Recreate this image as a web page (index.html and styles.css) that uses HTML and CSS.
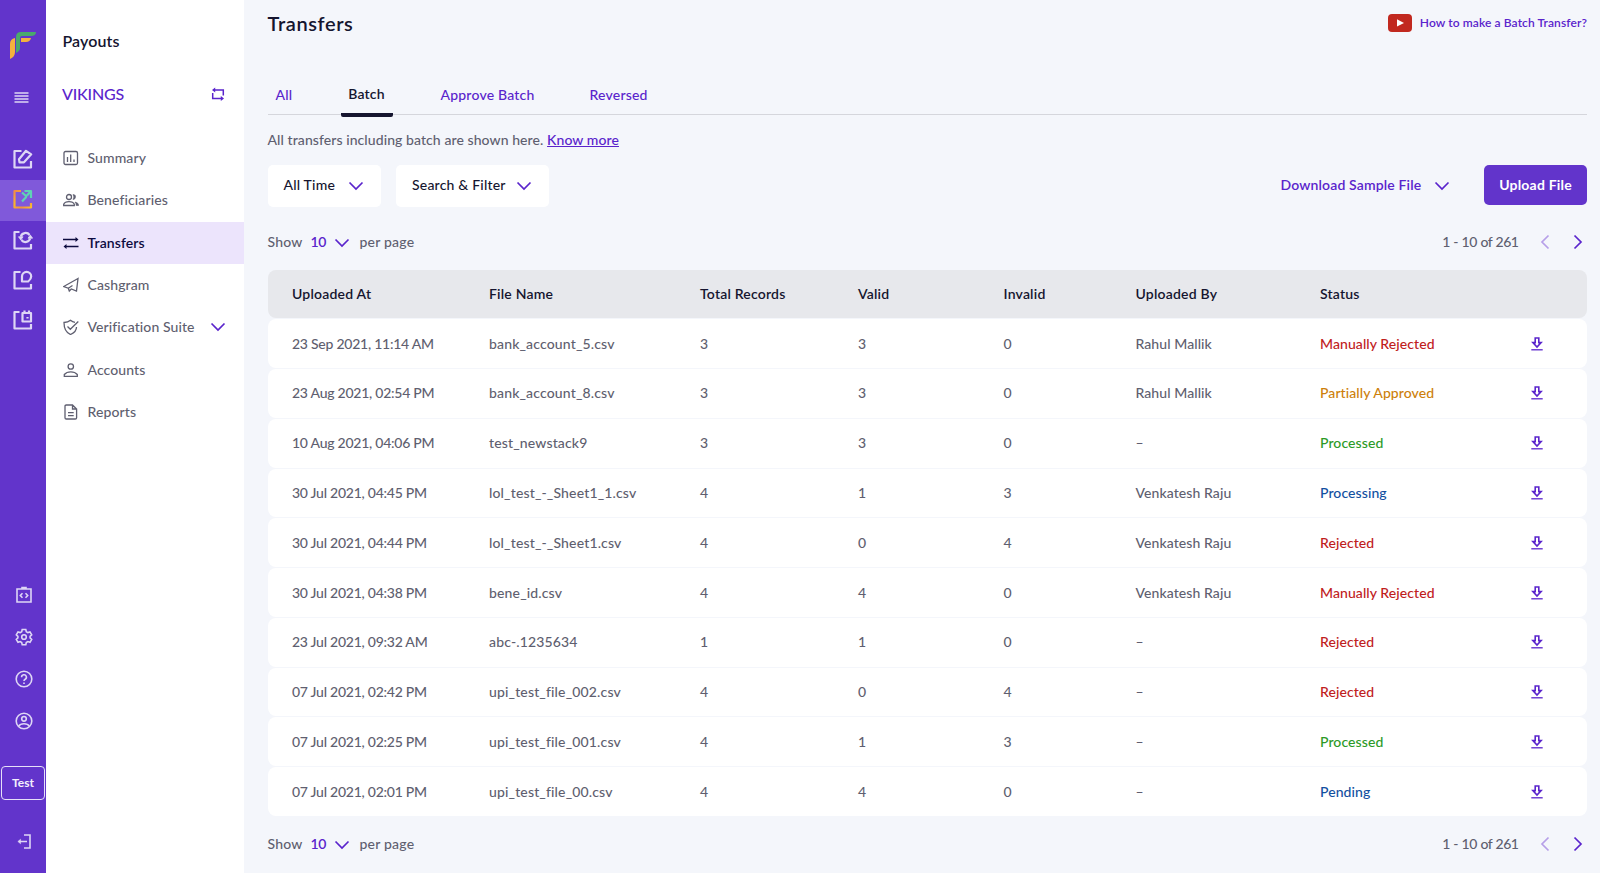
FILE: index.html
```
<!DOCTYPE html>
<html lang="en">
<head>
    <meta charset="UTF-8">
    <title>Payouts - Transfers</title>
    <link rel="stylesheet" href="styles.css">
</head>
<body>
    <svg class="sprite">
        <symbol id="chevron" viewBox="0 0 16 10"><path d="M1.500 1.500l6.500 6.500 6.500-6.500"/></symbol>
        <symbol id="left" viewBox="0 0 10 16"><path d="M8.500 1.500L2 8l6.500 6.500"/></symbol>
        <symbol id="right" viewBox="0 0 10 16"><path d="M1.500 1.500L8 8l-6.500 6.500"/></symbol>
        <symbol id="download" viewBox="0 0 12 14"><path d="M4.200 1h3.600v4.600h2.300L6 10 1.900 5.600h2.300z" stroke-width="1.600"/><path d="M.3 12.800h11.400" stroke-width="1.300"/></symbol>
    </svg>

    <div class="rail">
        <svg class="logo" viewBox="0 0 26 27"><path d="M5 6v14q0 5-5 7V12q0-5 5-6z" fill="#f4b23e"/><path d="M11 6h10q-1 4-5 4h-5z" fill="#f4b23e"/><path d="M26 0q0 4-5 4h-9q-2 0-2 2v10q0 3-4 5V5q0-5 5-5z" fill="#4aa96c"/></svg>
        <svg class="burger" viewBox="0 0 15 11"><path d="M.5 1h14M.5 4h14M.5 7h14M.5 10h14"/></svg>

        <div class="products">
            <a class="product"><svg viewBox="0 0 20 20"><path d="M8.500 2H1.500v16.500H18V12"/><path d="M6 10.200L13 1.800l5.200 3.500-7.200 8H6.500z"/></svg></a>
            <a class="product active"><svg viewBox="0 0 20 20">
                <defs><linearGradient id="warm" x1="0" y1="0" x2="1" y2="1"><stop offset="0" stop-color="#f08a4b"/><stop offset=".4" stop-color="#f9b52c"/><stop offset=".7" stop-color="#f2923f"/><stop offset="1" stop-color="#f9bd2c"/></linearGradient></defs>
                <path d="M8 2H1.500v16.500H18V14" stroke="url(#warm)"/><path d="M11.500 2H18v7M17.500 2.500l-3.500 4M9 3.500l4 3.500q.5.500 0 1.200L9 12.500" stroke="#5fd3b4"/></svg></a>
            <a class="product"><svg viewBox="0 0 20 20"><path d="M6.500 2H1.500v16.500H18V14"/><path d="M7.800 6.500a5 5 0 0 1 8.800-1.500M17.200 8.500a5 5 0 0 1-8.800 1.500"/><path d="M5.500 6.800h4.600L7.800 10zM19.600 8.200H15l2.300-3.200z" fill="#ded6f5" stroke-width=".8"/></svg></a>
            <a class="product"><svg viewBox="0 0 20 20"><path d="M7.500 2H1.500v16.500H18V14"/><path d="M9 11.500V6.500a4.600 4.600 0 0 1 9.200 0q0 2.500-3 5z"/></svg></a>
            <a class="product"><svg viewBox="0 0 20 20"><path d="M6.500 2H1.500v16.500H18V14"/><path d="M9.500 3H18v8.500H9.500zM11.500.500v2.500M16 .500v2.500"/><path d="M14.500 7v1.500"/></svg></a>
        </div>

        <div class="tools">
            <svg viewBox="0 0 18 18"><path d="M2 3h14v13H2zM7 3V1.500h4V3M7.500 7.200L5.300 9.500l2.200 2.300M10.500 7.200l2.200 2.300-2.200 2.300"/></svg>
            <svg viewBox="0 0 18 18"><path d="M7.200 1.500h3.600l.5 2.200 1.500.9 2.200-.7 1.700 3-1.600 1.500v1.400l1.600 1.500-1.700 3-2.200-.7-1.500.9-.5 2.200H7.200l-.5-2.200-1.500-.9-2.200.7-1.700-3 1.600-1.500V8.400L1.300 6.900l1.700-3 2.200.7 1.500-.9z"/><circle cx="9" cy="9" r="2.300"/></svg>
            <svg viewBox="0 0 18 18"><circle cx="9" cy="9" r="7.800"/><path d="M6.600 7.200a2.400 2.400 0 1 1 3.600 2c-.8.500-1.200.9-1.200 1.800M9 12.500v1.500"/></svg>
            <svg viewBox="0 0 18 18"><circle cx="9" cy="9" r="7.800"/><circle cx="9" cy="6.800" r="2.300"/><path d="M3.700 14c1-1.600 3-2.300 5.300-2.300s4.300.7 5.300 2.300"/></svg>
        </div>
        <div class="test">Test</div>
        <svg class="logout" viewBox="0 0 14 15"><path d="M7 1h6v13H7M10 7.500H2"/><path d="M3.600 5.200v4.600L.8 7.500z" fill="#ded6f5" stroke-width=".5"/></svg>
    </div>

    <div class="sidebar">
        <div class="app-name">Payouts</div>
        <div class="merchant"><span>VIKINGS</span><svg viewBox="0 0 14 14"><path d="M1.700 6v5.500H10M12.300 8.500V3H4"/><path d="M4.200.500v5L1 3zM9.800 9v5l3.200-2.500z" fill="#5a24cc" stroke="none"/></svg></div>
        <div class="menu">
            <a><svg viewBox="0 0 16 16"><rect x="1" y="1.500" width="13.500" height="13" rx="1.500"/><path d="M4.500 7v5M7.700 4.500V12M11 9.500V12"/></svg>Summary</a>
            <a><svg viewBox="0 0 16 16"><circle cx="6" cy="5" r="2.500"/><path d="M.7 13.500v-1.200C1.500 10.500 3.700 9.700 6 9.700s4.500.8 5.300 2.600v1.200z"/><path d="M10 2.500q3 .2 2.500 2.700T10 7.500q1.800-2.500 0-5zM12 10q3.500.5 3.700 3.500h-2.500q.2-2-1.200-3.500z" fill="#636375" stroke-width=".6"/></svg>Beneficiaries</a>
            <a class="current"><svg viewBox="0 0 16 16"><path d="M0 4.500h13M15.500 11.500h-13" stroke-width="1.500"/><path d="M12.500 2v5l3-2.500zM3.500 9v5l-3-2.500z" fill="#0d0b3f" stroke="none"/></svg>Transfers</a>
            <a><svg viewBox="0 0 16 16"><path d="M15 1.500L.7 9.500l4.600 1.700 1 2.800 2-2 5.200 2zM5.300 11.200L9.500 8.500"/></svg>Cashgram</a>
            <a><svg viewBox="0 0 16 16"><path d="M13.500 8c0 3.500-2.500 6-6 7.500C4 14 1 10.500 1 3.500Q5 3.500 7.500 1.300 9.500 3 12 3.300M4.500 7.500l2.800 2.800 8-7.800"/></svg>Verification Suite<svg class="chevron"><use href="#chevron"/></svg></a>
            <a><svg viewBox="0 0 16 16"><circle cx="7.800" cy="4.500" r="2.700"/><path d="M1.300 14.300v-1.800Q3.500 9.800 7.800 9.800t6.500 2.700v1.800z"/></svg>Accounts</a>
            <a><svg viewBox="0 0 16 16"><path d="M9.500 1H3.300Q2 1 2 2.300v11.400Q2 15 3.300 15h9q1.300 0 1.300-1.300V5zM9.500 1v4h4"/><path d="M5 8.700h5.700M5 11.700h5.700"/></svg>Reports</a>
        </div>
    </div>

    <div class="main">
        <div class="title-row">
            <h1>Transfers</h1>
            <a class="video"><svg viewBox="0 0 24 18"><rect width="24" height="18" rx="4" fill="#c1281f"/><path d="M9 5.200v7.400l7-3.700z" fill="#fff"/></svg><span>How to make a Batch Transfer?</span></a>
        </div>

        <div class="tabs">
            <a class="tab-all">All</a>
            <a class="tab-batch selected">Batch</a>
            <a class="tab-approve">Approve Batch</a>
            <a>Reversed</a>
        </div>

        <p class="hint">All transfers including batch are shown here. <a>Know more</a></p>

        <div class="filters">
            <div class="dropdown time"><span>All Time</span><svg class="chevron"><use href="#chevron"/></svg></div>
            <div class="dropdown search"><span>Search &amp; Filter</span><svg class="chevron"><use href="#chevron"/></svg></div>
            <div class="sample"><span>Download Sample File</span><svg class="chevron"><use href="#chevron"/></svg></div>
            <button class="upload-btn">Upload File</button>
        </div>

        <div class="pager">
            <span>Show</span><b>10</b><svg class="chevron"><use href="#chevron"/></svg><span class="per-page">per page</span>
            <span class="range">1 - 10 of 261</span>
            <svg class="arrow off"><use href="#left"/></svg>
            <svg class="arrow"><use href="#right"/></svg>
        </div>

        <div class="table">
            <div class="row head">
                <span>Uploaded At</span><span>File Name</span><span>Total Records</span><span>Valid</span><span>Invalid</span><span>Uploaded By</span><span>Status</span>
            </div>
            <div id="transfer_rows"></div>
        </div>

        <div class="pager bottom">
            <span>Show</span><b>10</b><svg class="chevron"><use href="#chevron"/></svg><span class="per-page">per page</span>
            <span class="range">1 - 10 of 261</span>
            <svg class="arrow off"><use href="#left"/></svg>
            <svg class="arrow"><use href="#right"/></svg>
        </div>
    </div>

    <script>
        let transfers = [
            ["23 Sep 2021, 11:14 AM", "bank_account_5.csv", 3, 3, 0, "Rahul Mallik", "Manually Rejected", "red"],
            ["23 Aug 2021, 02:54 PM", "bank_account_8.csv", 3, 3, 0, "Rahul Mallik", "Partially Approved", "orange"],
            ["10 Aug 2021, 04:06 PM", "test_newstack9", 3, 3, 0, "–", "Processed", "green"],
            ["30 Jul 2021, 04:45 PM", "lol_test_-_Sheet1_1.csv", 4, 1, 3, "Venkatesh Raju", "Processing", "blue"],
            ["30 Jul 2021, 04:44 PM", "lol_test_-_Sheet1.csv", 4, 0, 4, "Venkatesh Raju", "Rejected", "red"],
            ["30 Jul 2021, 04:38 PM", "bene_id.csv", 4, 4, 0, "Venkatesh Raju", "Manually Rejected", "red"],
            ["23 Jul 2021, 09:32 AM", "abc-.1235634", 1, 1, 0, "–", "Rejected", "red"],
            ["07 Jul 2021, 02:42 PM", "upi_test_file_002.csv", 4, 0, 4, "–", "Rejected", "red"],
            ["07 Jul 2021, 02:25 PM", "upi_test_file_001.csv", 4, 1, 3, "–", "Processed", "green"],
            ["07 Jul 2021, 02:01 PM", "upi_test_file_00.csv", 4, 4, 0, "–", "Pending", "blue"]
        ];

        let rows = "";
        transfers.forEach((t) => {
            rows += `
                <div class="row">
                    <span class="date">${t[0]}</span><span class="file">${t[1]}</span><span>${t[2]}</span><span>${t[3]}</span><span>${t[4]}</span>
                    <span class="user">${t[5]}</span><span class="status ${t[7]}">${t[6]}</span>
                    <svg class="download"><use href="#download"/></svg>
                </div>
            `;
        });
        document.getElementById("transfer_rows").innerHTML = rows;
    </script>
</body>
</html>
```
FILE: styles.css
```
* {
    box-sizing: border-box;
}

body {
    margin: 0;
    display: flex;
    height: 873px;
    overflow: hidden;
    background: #f4f6fb;
    color: #5f5f70;
    font-family: Lato, "Open Sans", sans-serif;
    font-size: 14px;
    font-weight: 500;
    line-height: 20px;
    white-space: nowrap;
}

svg {
    fill: none;
    stroke: currentColor;
    stroke-width: 1.3;
    flex-shrink: 0;
    display: block;
}

.sprite {
    display: none;
}

.rail {
    width: 46px;
    display: flex;
    flex-direction: column;
    align-items: center;
    background: #6234cb;
    color: #ded6f5;
}

.logo {
    width: 26px;
    height: 27px;
    margin-top: 32px;
    stroke: none;
}

.burger {
    width: 15px;
    height: 11px;
    margin: 33px 3px 0 0;
    stroke-width: 1.5;
}

.products {
    width: 100%;
    margin-top: 37px;
}

.product {
    height: 40.3px;
    display: flex;
    align-items: center;
    justify-content: center;
    padding: 0 1px 2px 0;
}

.product svg {
    width: 20px;
    height: 20px;
    stroke-width: 2.2;
    stroke-linejoin: round;
}

.product.active {
    background: #8059da;
}

.tools {
    display: flex;
    flex-direction: column;
    gap: 24px;
    margin: 245px 0 0 1px;
}

.tools svg {
    width: 18px;
    height: 18px;
    stroke-width: 1.6;
}

.test {
    width: 44px;
    height: 34px;
    margin-top: 36px;
    border: 1px solid #e6e0f8;
    border-radius: 4px;
    color: #f3effc;
    font-size: 12px;
    font-weight: 700;
    line-height: 32px;
    text-align: center;
}

.logout {
    width: 14px;
    height: 15px;
    margin: 34px 0 0 1px;
    stroke-width: 1.6;
}

.sidebar {
    width: 198px;
    background: #fff;
}

.app-name {
    margin: 31px 0 0 16.5px;
    color: #15152f;
    font-size: 16px;
    font-weight: 600;
    letter-spacing: 0.1px;
}

.merchant {
    display: flex;
    align-items: center;
    justify-content: space-between;
    margin: 33px 19px 0 16px;
    color: #5a24cc;
    font-size: 16px;
    letter-spacing: -0.2px;
}

.merchant svg {
    width: 14px;
    height: 14px;
    stroke-width: 1.5;
}

.menu {
    margin-top: 33px;
}

.menu a {
    height: 42.3px;
    display: flex;
    align-items: center;
    gap: 9px;
    padding: 0 18px 0 16.5px;
    letter-spacing: 0.1px;
}

.menu a > svg:first-child {
    width: 16px;
    height: 16px;
}

.menu a.current {
    background: #ece4fc;
    color: #0d0b3f;
    font-weight: 600;
}

.menu .chevron {
    margin-left: auto;
}

.chevron {
    width: 16px;
    height: 10px;
    color: #5a24cc;
    stroke-width: 1.7;
}

.main {
    flex: 1;
    padding: 0 13px 0 23.5px;
}

.title-row {
    display: flex;
    justify-content: space-between;
    align-items: center;
    height: 46px;
}

h1 {
    margin: 0;
    color: #15152f;
    font-size: 20px;
    font-weight: 600;
    letter-spacing: 0.6px;
}

.video {
    display: flex;
    align-items: center;
    gap: 8px;
    color: #5a24cc;
    font-size: 12px;
    font-weight: 600;
    letter-spacing: 0.1px;
}

.video svg {
    width: 24px;
    height: 18px;
    stroke: none;
}

.tabs {
    display: flex;
    height: 69px;
    padding: 39px 0 0 8px;
    border-bottom: 1px solid #d5d6dc;
    color: #5a24cc;
    letter-spacing: 0.2px;
}

.tab-all {
    width: 65px;
}

.tab-batch {
    width: 52px;
    height: 33px;
    margin: -1px 48px 0 0;
}

.tabs .selected {
    border-bottom: 4px solid #15152f;
    border-radius: 2px;
    color: #15152f;
    font-weight: 600;
    text-align: center;
}

.tab-approve {
    width: 149px;
}

.hint {
    margin: 15px 0 14.5px;
    letter-spacing: 0.08px;
}

.hint a {
    color: #5a24cc;
    text-decoration: underline;
}

.filters {
    display: flex;
    height: 42px;
    color: #15152f;
    letter-spacing: 0.2px;
}

.filters > div {
    display: flex;
    align-items: center;
    justify-content: space-between;
}

.dropdown {
    height: 42px;
    margin-right: 15.5px;
    padding: 0 17px 2px 16px;
    border-radius: 5px;
    background: #fff;
}

.dropdown .chevron,
.sample .chevron {
    margin-top: 2px;
}

.time {
    width: 113px;
}

.search {
    width: 153px;
}

.filters .sample {
    width: 169px;
    height: 40px;
    margin: 0 34.5px 0 auto;
    color: #5a24cc;
    font-weight: 600;
    letter-spacing: 0.15px;
}

.upload-btn {
    width: 103px;
    height: 40px;
    padding: 0;
    border: none;
    border-radius: 5px;
    background: #6234cb;
    color: #fff;
    font: inherit;
    font-weight: 700;
    letter-spacing: 0.2px;
}

.pager {
    display: flex;
    align-items: center;
    height: 20px;
    margin-top: 25.5px;
    letter-spacing: 0.2px;
}

.pager b {
    width: 23px;
    margin-left: 8px;
    color: #5a24cc;
    font-weight: 600;
    letter-spacing: -0.5px;
}

.pager .chevron {
    margin-top: 2px;
}

.per-page {
    margin-left: 10px;
}

.range {
    margin: 0 1px 0 auto;
    letter-spacing: -0.45px;
    word-spacing: 0.4px;
}

.arrow {
    width: 10px;
    height: 16px;
    margin: 0 4.5px 0 23px;
    color: #5a24cc;
    stroke-width: 1.7;
}

.arrow.off {
    margin: 0 0 0 20px;
    color: #b69fe8;
}

.table {
    margin-top: 18px;
}

.row {
    display: grid;
    grid-template-columns: 197px 211px 158px 145.5px 132px 184.5px 211px 12px;
    align-items: center;
    height: 48.77px;
    margin-bottom: 1px;
    padding-left: 24.5px;
    border-radius: 8px;
    background: #fff;
    letter-spacing: 0.2px;
}

.head {
    height: 48.3px;
    background: #e7e8ec;
    color: #15152f;
    font-weight: 600;
}

.date {
    letter-spacing: -0.25px;
}

.file {
    letter-spacing: 0.15px;
}

.user,
.status {
    letter-spacing: 0.08px;
}

.download {
    width: 12px;
    height: 14px;
    color: #5a24cc;
}

.red {
    color: #c0201c;
}

.orange {
    color: #cd7f0b;
}

.green {
    color: #2c9a27;
}

.blue {
    color: #12509f;
}

.bottom {
    margin-top: 18px;
}
```
